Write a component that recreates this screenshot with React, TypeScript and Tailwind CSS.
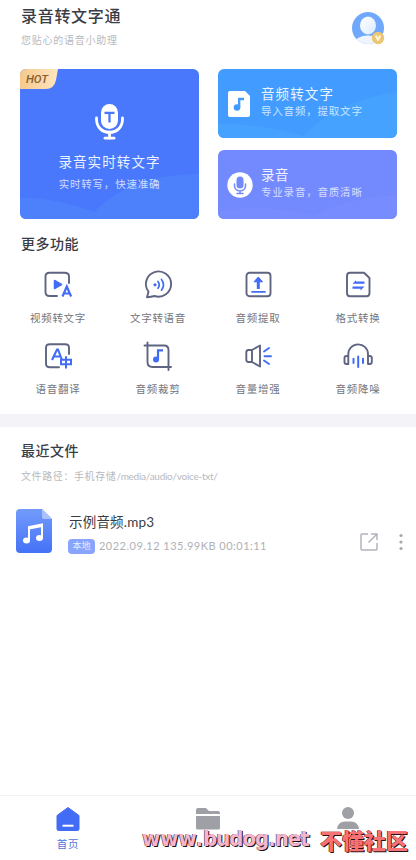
import type { ReactNode } from 'react';

type Feature = { label: string; icon: ReactNode };

const line = {
  fill: 'none',
  stroke: '#5f6480',
  strokeWidth: 1.9,
  strokeLinecap: 'round',
  strokeLinejoin: 'round',
} as const;

const VideoIcon = () => (
  <svg className="h-8 w-8" viewBox="0 0 32 32">
    <path {...line} d="M15 28H7.500Q3.500 28 3.500 24V8.500Q3.500 4.800 7.500 4.800H22.500Q27 4.800 27 8.500V15" />
    <path d="M12.500 12.500v8l7-4z" fill="#426cf5" stroke="#426cf5" strokeWidth="1.500" strokeLinejoin="round" />
    <path d="M20.500 28.500L24.800 18.500L29.100 28.500M22 25.500H27.600" fill="none" stroke="#426cf5" strokeWidth="2.200" />
  </svg>
);

const SpeechIcon = () => (
  <svg className="h-8 w-8" viewBox="0 0 32 32">
    <path {...line} d="M5 30L6.500 24.500A12.600 12.600 0 1 1 12.500 28.800Q9 29.500 5 30Z" transform="translate(0 -0.800)" />
    <circle cx="13" cy="16.800" r="1.600" fill="#426cf5" />
    <path d="M16 13.500Q18.500 16.800 16 20.200M19.500 11.500Q23.500 16.800 19.500 22.200" fill="none" stroke="#426cf5" strokeWidth="1.700" strokeLinecap="round" />
  </svg>
);

const ExtractIcon = () => (
  <svg className="h-8 w-8" viewBox="0 0 32 32">
    <rect {...line} x="4.500" y="4.800" width="24" height="23.500" rx="3" />
    <path d="M16.300 11v10" stroke="#426cf5" strokeWidth="3" />
    <path d="M12 13.800L16.300 9L20.600 13.800Z" fill="#426cf5" stroke="#426cf5" strokeLinejoin="round" />
    <path d="M10 23.800H23" stroke="#426cf5" strokeWidth="1.800" strokeLinecap="round" />
  </svg>
);

const ConvertIcon = () => (
  <svg className="h-8 w-8" viewBox="0 0 32 32">
    <path {...line} d="M8 4.800H22L27.500 10V25Q27.500 28.300 24.500 28.300H8Q5 28.300 5 25V8Q5 4.800 8 4.800Z" />
    <path d="M10.500 15.800L14 12.200V13.600H22.500V15.800H10.500ZM22.500 18.500H10.500V20.700H18.500V22.600L22.500 18.500Z" fill="#426cf5" />
  </svg>
);

const TranslateIcon = () => (
  <svg className="h-8 w-8" viewBox="0 0 32 32">
    <path {...line} d="M17 28.200H8Q4 28.200 4 25V8.500Q4 5.200 8 5.200H23Q27 5.200 27 8.500V15" />
    <path d="M10 21L15 10.500H16L20 21M12 17.500H18.500" fill="none" stroke="#426cf5" strokeWidth="2.100" />
    <path d="M19 20.700H29V25.200H19ZM24 17.200V29.500" fill="none" stroke="#426cf5" strokeWidth="2" />
  </svg>
);

const CropIcon = () => (
  <svg className="h-8 w-8" viewBox="0 0 32 32">
    <path {...line} d="M2.500 6.500H22Q26.500 6.500 26.500 11V31M5.500 3.500V23Q5.500 28 10.500 28H29" />
    <circle cx="14" cy="20.500" r="3" fill="#426cf5" />
    <path d="M16 20.500V11.300H21" fill="none" stroke="#426cf5" strokeWidth="2.200" />
  </svg>
);

const VolumeIcon = () => (
  <svg className="h-8 w-8" viewBox="0 0 32 32">
    <path {...line} d="M10 11H6.500Q4.300 11 4.300 13.500V20.500Q4.300 23 6.500 23H10L18 27.500V6.500ZM10 11V23" />
    <path d="M22 12.500L27 9M22.500 17.300H29M22 21.500L27 25" fill="none" stroke="#426cf5" strokeWidth="1.900" strokeLinecap="round" />
  </svg>
);

const HeadphoneIcon = () => (
  <svg className="h-8 w-8" viewBox="0 0 32 32">
    <path {...line} d="M6.300 17V15A9.700 9.500 0 0 1 26 15V17M6.300 17H4.500Q2.500 17 2.500 19V23Q2.500 25 4.500 25H6.300ZM26 17H27.800Q29.800 17 29.800 19V23Q29.800 25 27.800 25H26Z" />
    <path d="M11.500 19.800V24M16.200 17.500V28M21 19.800V24" stroke="#426cf5" strokeWidth="2" strokeLinecap="round" />
  </svg>
);

const features: Feature[] = [
  { label: '视频转文字', icon: <VideoIcon /> },
  { label: '文字转语音', icon: <SpeechIcon /> },
  { label: '音频提取', icon: <ExtractIcon /> },
  { label: '格式转换', icon: <ConvertIcon /> },
  { label: '语音翻译', icon: <TranslateIcon /> },
  { label: '音频裁剪', icon: <CropIcon /> },
  { label: '音量增强', icon: <VolumeIcon /> },
  { label: '音频降噪', icon: <HeadphoneIcon /> },
];

const Avatar = () => (
  <svg className="mt-[11px] h-[34px] w-[34px]" viewBox="0 0 34 34">
    <defs>
      <clipPath id="avatarClip"><circle cx="17" cy="17" r="16" /></clipPath>
      <linearGradient id="head" x1="0" y1="0" x2="1" y2="1">
        <stop stopColor="#fff" />
        <stop offset="1" stopColor="#dcebff" />
      </linearGradient>
    </defs>
    <circle cx="17" cy="17" r="16" fill="#70a9fb" />
    <ellipse cx="17" cy="33" rx="14" ry="8.500" fill="#f0f4ff" clipPath="url(#avatarClip)" />
    <ellipse cx="17" cy="14.500" rx="8" ry="9" fill="url(#head)" />
    <circle cx="27" cy="27" r="6.200" fill="#edc674" />
    <path d="M24.700 24.500L27 29L29.300 24.500" fill="none" stroke="#fff6dc" strokeWidth="2" strokeLinejoin="round" />
  </svg>
);

const HeroMic = () => (
  <svg className="mr-[2px] h-9 w-8" viewBox="0 0 32 36">
    <rect x="8" y="0" width="17" height="25" rx="8.500" fill="#fff" />
    <path d="M3.500 14V15C3.500 33 29.500 33 29.500 15V14M16.500 28V34" fill="none" stroke="#fff" strokeWidth="2.800" strokeLinecap="round" />
    <path d="M12 34.200H21" stroke="#fff" strokeWidth="2.800" strokeLinecap="round" />
    <path d="M11.500 8.800H21.500M16.500 8.800V18.500" stroke="#4978fc" strokeWidth="2.300" />
  </svg>
);

const App = () => {
  return (
    <div className="relative flex h-[860px] w-[416px] flex-col overflow-hidden bg-white font-['Lato','Noto_Sans_CJK_SC',sans-serif] text-[#3a3c45]">
      {/* Header */}
      <header className="flex h-[69px] shrink-0 justify-between pl-[21px] pr-[31px]">
        <div className="pt-[5px]">
          <h1 className="text-[16px] leading-[22px] font-medium tracking-[0.7px]">录音转文字通</h1>
          <p className="mt-[5px] text-[10px] leading-4 tracking-[0.75px] text-[#b9b9bd]">您贴心的语音小助理</p>
        </div>
        <Avatar />
      </header>

      {/* Main cards */}
      <section className="flex h-[150px] shrink-0 justify-between pl-[20px] pr-[19px]">
        <button className="relative flex w-[179px] flex-col items-center overflow-hidden rounded-md bg-[#4978fc] pt-[35px] text-white">
          <svg className="absolute inset-0 h-full w-full" viewBox="0 0 179 150">
            <path d="M0 129Q35 128 80 145L68 150H0ZM68 150Q105 105 179 105V150Z" fill="#4d81fc" />
          </svg>
          <span className="absolute top-0 left-0 h-[20px] w-[38px]">
            <svg className="absolute inset-0 h-full w-full" viewBox="0 0 38 20">
              <defs>
                <linearGradient id="hot">
                  <stop stopColor="#f5c98c" />
                  <stop offset="1" stopColor="#ffe5c0" />
                </linearGradient>
              </defs>
              <path d="M0 0H38L36 11Q34 20 26 20H0Z" fill="url(#hot)" />
            </svg>
            <span className="relative block pr-1 text-center font-['Roboto',sans-serif] text-[11.500px] leading-5 font-medium text-[#86602f] italic">HOT</span>
          </span>
          <HeroMic />
          <span className="relative mt-3 text-[13.500px] leading-5 tracking-[1.100px] text-[#edf2ff]">录音实时转文字</span>
          <span className="relative mt-0.5 text-[10.500px] leading-5 tracking-[0.800px] text-[#d0ddff]">实时转写，快速准确</span>
        </button>

        <div className="flex flex-col gap-3">
          <button className="relative flex h-[69px] w-[179px] items-center overflow-hidden rounded-md bg-[#429bfe] pl-[10px] text-left text-white">
            <svg className="absolute inset-0 h-full w-full" viewBox="0 0 179 69">
              <path d="M0 55Q45 54 92 69H0ZM83 69Q120 31 179 23V69Z" fill="#46a2ff" />
            </svg>
            <svg className="relative h-[26px] w-[22px]" viewBox="0 0 22 26">
              <path d="M2 0H17L22 5V24Q22 26 20 26H2Q0 26 0 24V2Q0 0 2 0Z" fill="#fff" />
              <circle cx="9" cy="16.500" r="3.300" fill="#429bfe" />
              <path d="M11.200 16.500V8H16" fill="none" stroke="#429bfe" strokeWidth="2.300" />
            </svg>
            <div className="relative -mt-1 ml-[11px] flex flex-col">
              <span className="text-[13.500px] leading-[18px] tracking-[1.100px] text-[#eaf5ff]">音频转文字</span>
              <span className="text-[10.500px] leading-4 tracking-[0.800px] text-[#cde6ff]">导入音频，提取文字</span>
            </div>
          </button>
          <button className="relative flex h-[69px] w-[179px] items-center overflow-hidden rounded-md bg-[#7389fe] pl-[9px] text-left text-white">
            <svg className="absolute inset-0 h-full w-full" viewBox="0 0 179 69">
              <path d="M0 62Q45 51 110 69H0ZM90 69Q125 48 179 45V69Z" fill="#778dff" />
            </svg>
            <svg className="relative h-[26px] w-[26px]" viewBox="0 0 26 26">
              <circle cx="13" cy="13" r="12.700" fill="#fff" />
              <rect x="9.500" y="4.500" width="7" height="12" rx="3.500" fill="#7389fe" />
              <path d="M7.500 12V14C7.500 20.500 18.500 20.500 18.500 14V12M13 19V21M10 21.500H16" fill="none" stroke="#7389fe" strokeWidth="1.500" strokeLinecap="round" />
            </svg>
            <div className="relative -mt-1 ml-[8px] flex flex-col">
              <span className="text-[13.500px] leading-[18px] tracking-[0.600px] text-[#f0f2ff]">录音</span>
              <span className="text-[10.500px] leading-4 tracking-[0.800px] text-[#d8deff]">专业录音，音质清晰</span>
            </div>
          </button>
        </div>
      </section>

      {/* More features */}
      <section className="h-[195px] shrink-0">
        <h2 className="pt-[15px] pl-[21px] text-[14px] leading-5 font-medium tracking-[0.5px]">更多功能</h2>
        <div className="mt-3.5 grid grid-cols-4 px-2">
          {features.map((item) => (
            <button key={item.label} className="flex h-[71px] flex-col items-center">
              {item.icon}
              <span className="mt-2 text-[10.500px] leading-5 tracking-[0.700px] text-[#74757c]">{item.label}</span>
            </button>
          ))}
        </div>
      </section>

      <div className="h-[13px] shrink-0 bg-[#f3f3f8]" />

      {/* Recent files */}
      <section className="flex-1 pt-[14px]">
        <div className="pl-[21px]">
          <h2 className="text-[14px] leading-5 font-medium tracking-[0.5px]">最近文件</h2>
          <p className="mt-[7px] text-[10px] leading-4 tracking-[-0.270px] text-[#b9b9bd]">
            <span className="tracking-[0.6px]">文件路径：手机存储</span>/media/audio/voice-txt/
          </p>
        </div>
        <div className="mt-[25px] flex pl-4">
          <svg className="h-11 w-9" viewBox="0 0 36 44">
            <defs>
              <linearGradient id="file" x1="0" y1="0" x2="0" y2="1">
                <stop stopColor="#739bfb" />
                <stop offset="1" stopColor="#4472f7" />
              </linearGradient>
            </defs>
            <path d="M4 0H26L36 10V40Q36 44 32 44H4Q0 44 0 40V4Q0 0 4 0Z" fill="url(#file)" />
            <path d="M26 0L36 10H28Q26 10 26 8Z" fill="#a9c2ff" />
            <path d="M13 31V18L26 15.500V29M13 19.500L26 17" fill="none" stroke="#fff" strokeWidth="2" />
            <ellipse cx="10.500" cy="31.500" rx="3.500" ry="3" fill="#fff" />
            <ellipse cx="23.500" cy="29" rx="3.500" ry="3" fill="#fff" />
          </svg>
          <div className="ml-4 w-[292px] pt-[3px]">
            <div className="pl-px text-[13.500px] leading-5 tracking-[0.200px]">示例音频.mp3</div>
            <div className="mt-1.5 flex items-center">
              <span className="flex h-[15px] w-[27px] items-center justify-center rounded-sm bg-[#89a4fc] text-[9px] text-[#e5ecff]">本地</span>
              <span className="ml-1 text-[11px] leading-4 tracking-[0.480px] whitespace-pre text-[#b0b0b5]">2022.09.12 135.99KB 00:01:11</span>
            </div>
          </div>
          <svg className="mt-6 h-[18px] w-[18px]" viewBox="0 0 18 18" fill="none" stroke="#b2b3bd" strokeWidth="1.500">
            <path d="M8 1H2Q1 1 1 2V16Q1 17 2 17H16Q17 17 17 16V10M11 1H17V7M17 1L8.500 9.500" />
          </svg>
          <svg className="mt-6 ml-[21px] h-[18px] w-1" viewBox="0 0 4 18" fill="#a8a8b0">
            <circle cx="2" cy="2.500" r="1.600" />
            <circle cx="2" cy="9" r="1.600" />
            <circle cx="2" cy="15.500" r="1.600" />
          </svg>
        </div>
      </section>

      {/* Bottom tabs */}
      <nav className="flex h-[65px] shrink-0 justify-between border-t border-[#f3f3f5] px-[56px] pt-[11px]">
        <div className="flex w-6 flex-col items-center">
          <svg className="h-6 w-6" viewBox="0 0 24 24">
            <path d="M12 0.500L23 8.500V22Q23 23.500 21.500 23.500H2.500Q1 23.500 1 22V8.500Z" fill="#426cf5" stroke="#426cf5" strokeLinejoin="round" />
            <path d="M6.500 18.700H17.500" stroke="#fff" strokeWidth="2" />
          </svg>
          <span className="mt-[3px] text-[10.500px] leading-5 tracking-[0.800px] whitespace-nowrap text-[#5575d9]">首页</span>
        </div>
        <svg className="mt-px h-6 w-6" viewBox="0 0 24 24" fill="#9fa0a5">
          <path d="M0 6V2Q0 0 2 0H10L13 3H22Q24 3 24 5V6ZM0 8H24V20Q24 21.500 22.500 21.500H1.500Q0 21.500 0 20Z" />
        </svg>
        <svg className="h-10 w-6" viewBox="0 0 24 40" fill="#9fa0a5">
          <circle cx="12" cy="6" r="6" />
          <path d="M1 22Q2 14.500 9 14.500H15Q22 14.500 23 22Z" />
        </svg>
      </nav>

      {/* Site mark over the tab bar */}
      <div className="absolute top-[823px] left-[142px] flex h-8 items-center whitespace-nowrap">
        <span className="w-[178px] font-['DejaVu_Sans_Condensed','DejaVu_Sans',sans-serif] text-[22px] leading-8 font-bold font-stretch-condensed text-[#f8b4cb] [text-shadow:1px_1px_0_#171114,-0.500px_-0.500px_0_#4b3039]">
          www.<span className="tracking-[-1px]">budog.net</span>
        </span>
        <span className="font-['Noto_Sans_CJK_SC',sans-serif] text-[22px] leading-8 font-black text-[#f77275] [text-shadow:1px_1px_0_#2b1011,-0.500px_-0.500px_0_#43191b]">不懂社区</span>
      </div>
    </div>
  );
};

export default App;
